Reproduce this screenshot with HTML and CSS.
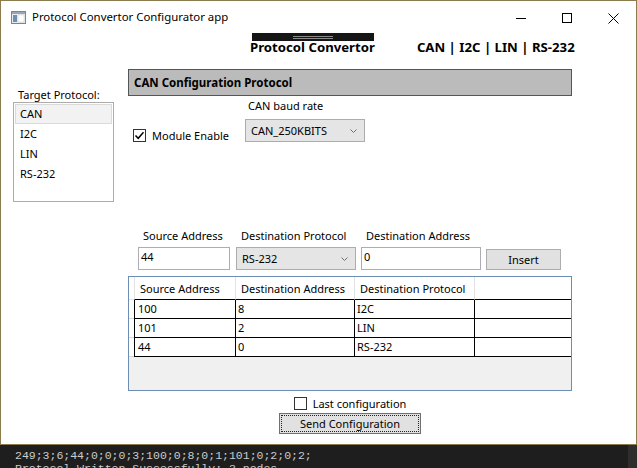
FILE: index.html
```html
<!DOCTYPE html>
<html>
<head>
<meta charset="utf-8">
<title>Protocol Convertor Configurator app</title>
<link rel="stylesheet" href="styles.css">
</head>
<body>
<div class="window">
  <div class="titlebar">
    <svg class="appicon" width="15" height="13" viewBox="0 0 15 13">
      <rect x="0.5" y="0.5" width="14" height="12" fill="#e9ecef" stroke="#7d8590"/>
      <rect x="1" y="1" width="13" height="2" fill="#9aa6b4"/>
      <rect x="2" y="4" width="4" height="7" fill="#6f8fb3"/>
      <rect x="7" y="4" width="6" height="7" fill="#ffffff" stroke="#c5cbd2" stroke-width="0.5"/>
    </svg>
    <span class="title">Protocol Convertor Configurator app</span>
    <div class="controls">
      <span class="ctl"><svg width="10" height="10" viewBox="0 0 10 10"><line x1="0" y1="5.5" x2="10" y2="5.5" stroke="#000" stroke-width="1"/></svg></span>
      <span class="ctl"><svg width="10" height="10" viewBox="0 0 10 10"><rect x="0.5" y="0.5" width="9" height="9" fill="none" stroke="#000" stroke-width="1"/></svg></span>
      <span class="ctl"><svg width="11" height="11" viewBox="0 0 11 11"><path d="M0.5 0.5 L10.5 10.5 M10.5 0.5 L0.5 10.5" stroke="#000" stroke-width="1" fill="none"/></svg></span>
    </div>
  </div>
  <div class="header">
    <span class="htext">Protocol Convertor</span>
    <span class="htext">CAN | I2C | LIN | RS-232</span>
    <div class="ghost"><span class="gline"></span><span class="gline"></span></div>
  </div>
  <div class="content">
    <div class="left">
      <div class="lbl">Target Protocol:</div>
      <ul class="list">
        <li class="sel">CAN</li>
        <li>I2C</li>
        <li>LIN</li>
        <li>RS-232</li>
      </ul>
    </div>
    <div class="main">
      <div class="bar">CAN Configuration Protocol</div>
      <div class="config">
        <div class="check enable">
          <span class="box"><svg width="11" height="11" viewBox="0 0 11 11"><path d="M1.5 5.5 L4.2 8.3 L9.5 2.3" stroke="#000" stroke-width="1.5" fill="none"/></svg></span>
          <span>Module Enable</span>
        </div>
        <div class="field baud">
          <div class="flabel">CAN baud rate</div>
          <div class="combo"><span>CAN_250KBITS</span><svg width="7" height="4" viewBox="0 0 7 4"><path d="M0.5 0.5 L3.5 3.5 L6.5 0.5" stroke="#707070" stroke-width="1" fill="none"/></svg></div>
        </div>
      </div>
      <div class="insert-row">
        <div class="field src">
          <div class="flabel">Source Address</div>
          <div class="textbox">44</div>
        </div>
        <div class="field dproto">
          <div class="flabel">Destination Protocol</div>
          <div class="combo"><span>RS-232</span><svg width="7" height="4" viewBox="0 0 7 4"><path d="M0.5 0.5 L3.5 3.5 L6.5 0.5" stroke="#707070" stroke-width="1" fill="none"/></svg></div>
        </div>
        <div class="field daddr">
          <div class="flabel">Destination Address</div>
          <div class="textbox">0</div>
        </div>
        <div class="btn insert">Insert</div>
      </div>
      <div class="grid">
        <div class="grow ghead">
          <div class="rh"></div>
          <div class="cell c1">Source Address</div>
          <div class="cell c2">Destination Address</div>
          <div class="cell c3">Destination Protocol</div>
          <div class="cell cf"></div>
        </div>
        <div class="grow">
          <div class="rh"></div>
          <div class="cell c1">100</div>
          <div class="cell c2">8</div>
          <div class="cell c3">I2C</div>
          <div class="cell cf"></div>
        </div>
        <div class="grow">
          <div class="rh"></div>
          <div class="cell c1">101</div>
          <div class="cell c2">2</div>
          <div class="cell c3">LIN</div>
          <div class="cell cf"></div>
        </div>
        <div class="grow">
          <div class="rh"></div>
          <div class="cell c1">44</div>
          <div class="cell c2">0</div>
          <div class="cell c3">RS-232</div>
          <div class="cell cf"></div>
        </div>
      </div>
      <div class="footer">
        <div class="check last">
          <span class="box"></span>
          <span>Last configuration</span>
        </div>
        <div class="send"><span>Send Configuration</span></div>
      </div>
    </div>
  </div>
</div>
<div class="console">
  <div class="ctext">
    <div>249;3;6;44;0;0;0;3;100;0;8;0;1;101;0;2;0;2;</div>
    <div>Protocol Written Successfully: 3 nodes</div>
  </div>
  <div class="scroll"></div>
</div>
</body>
</html>
```
FILE: styles.css
```css
* { box-sizing: border-box; margin: 0; padding: 0; }
html, body { width: 637px; height: 468px; overflow: hidden; }
body {
  background: #1e1e1e;
  font-family: "Noto Sans", "Open Sans", sans-serif;
  font-size: 11px;
  color: #000;
}
.window {
  width: 637px;
  height: 445px;
  background: #fff;
  border: 1px solid #8c7b4f;
  display: flex;
  flex-direction: column;
}
.titlebar {
  height: 30px;
  display: flex;
  align-items: center;
  padding-left: 10px;
}
.appicon { margin-right: 6px; margin-top: 3px; }
.title { font-size: 11.4px; line-height: 16px; margin-top: 2px; }
.controls { margin-left: auto; display: flex; height: 30px; }
.ctl {
  width: 46px;
  height: 30px;
  display: flex;
  align-items: center;
  justify-content: center;
  padding-top: 4px;
}
.header {
  height: 38px;
  padding-left: 249px;
  padding-top: 8px;
  display: flex;
  gap: 42px;
  font-weight: bold;
  font-size: 13.2px;
  line-height: 16px;
  position: relative;
}
.ghost {
  position: absolute;
  left: 251px;
  top: 2px;
  width: 122px;
  height: 8px;
  background: #151515;
  display: flex;
  flex-direction: column;
  align-items: center;
  justify-content: center;
  gap: 1px;
}
.gline { display: block; width: 40px; height: 1px; background: #8a8a8a; }
.content { display: flex; }
.left { margin-left: 12px; width: 101px; padding-top: 19px; }
.lbl { line-height: 14px; padding-left: 5px; }
.list {
  list-style: none;
  border: 1px solid #acacac;
  height: 100px;
  padding: 1px;
}
.list li {
  height: 20px;
  line-height: 18px;
  padding-left: 4px;
  border: 1px solid transparent;
}
.list li.sel { background: #f2f2f2; border-color: #dadada; }
.main { margin-left: 14px; width: 444px; }
.bar {
  height: 27px;
  border: 1px solid #555;
  background: #bbbbbb;
  font-weight: bold;
  font-size: 11.5px;
  padding-left: 5px;
  line-height: 25px;
}
.config { display: flex; align-items: flex-end; margin-top: 3px; }
.check { display: flex; align-items: center; height: 13px; line-height: 13px; }
.enable { width: 112px; margin-left: 5px; }
.box {
  width: 13px;
  height: 13px;
  border: 1px solid #333;
  background: #fff;
  margin-right: 6px;
  display: flex;
  align-items: center;
  justify-content: center;
}
.flabel { line-height: 14px; white-space: nowrap; }
.baud .flabel { padding-left: 3px; margin-bottom: 6px; }
.combo {
  height: 23px;
  border: 1px solid #acacac;
  background: #e5e5e5;
  display: flex;
  align-items: center;
  justify-content: space-between;
  padding-left: 5px;
  padding-right: 7px;
}
.baud .combo { width: 120px; }
.insert-row { display: flex; align-items: flex-end; margin-top: 87px; margin-left: 10px; }
.insert-row .flabel { padding-left: 5px; margin-bottom: 4px; }
.src { width: 92px; }
.dproto { width: 120px; margin-left: 6px; }
.daddr { width: 120px; margin-left: 5px; }
.textbox {
  height: 23px;
  border: 1px solid #abadb3;
  background: #fff;
  padding-left: 2px;
  padding-top: 1px;
  line-height: 16px;
}
.btn {
  height: 21px;
  width: 75px;
  margin-left: 5px;
  background: #e1e1e1;
  border: 1px solid #adadad;
  text-align: center;
  line-height: 19px;
}
.grid {
  margin-top: 6px;
  height: 115px;
  border: 1px solid #6d8db4;
  background: #f0f0f0;
  display: flex;
  flex-direction: column;
}
.grow { display: flex; height: 19px; background: #fff; }
.rh { width: 5px; border-bottom: 1px solid #d6d6d6; }
.cell {
  border-bottom: 1px solid #000;
  border-right: 1px solid #000;
  line-height: 18px;
  padding-left: 2px;
  white-space: nowrap;
}
.c1 { width: 102px; border-left: 1px solid #000; padding-left: 3px; }
.c2 { width: 119px; }
.c3 { width: 120px; }
.cf { flex: 1; border-right: none; }
.ghead { height: 23px; }
.ghead .cell { line-height: 24px; padding-left: 5px; border-right-color: #e3e3e3; }
.ghead .c1 { border-left-color: #e3e3e3; }
.ghead .rh { border-bottom-color: #e3e3e3; }
.footer { display: flex; flex-direction: column; align-items: center; margin-top: 6px; }
.send {
  margin-top: 3px;
  width: 142px;
  height: 21px;
  border: 1px solid #707070;
  background: #e1e1e1;
  padding: 1px;
  text-align: center;
}
.send span {
  display: block;
  height: 100%;
  border: 1px dotted #222;
  line-height: 15px;
}
.console {
  display: flex;
  height: 23px;
  font-family: "Liberation Mono", "DejaVu Sans Mono", monospace;
  font-size: 11.5px;
  line-height: 13px;
  color: #cccccc;
}
.ctext { padding: 4px 0 0 15px; }
.scroll { margin-left: auto; width: 9px; background: #2e2e2e; }
```
